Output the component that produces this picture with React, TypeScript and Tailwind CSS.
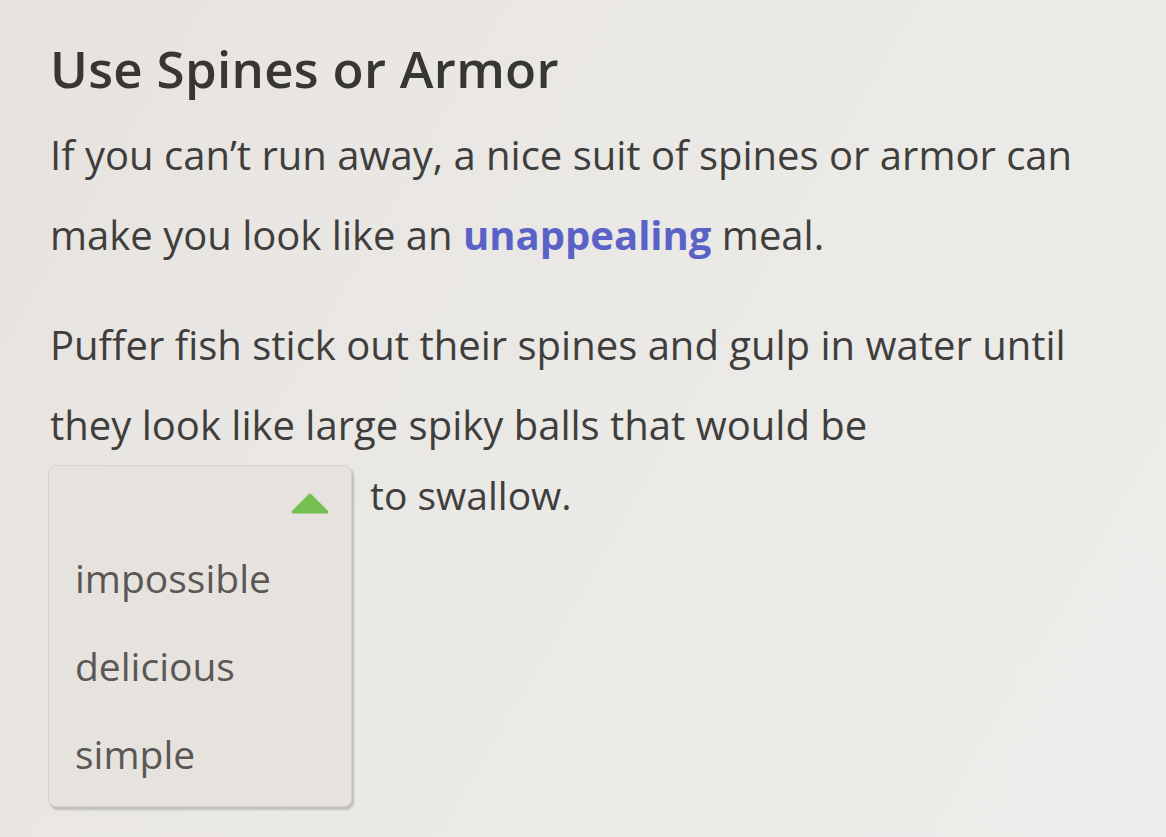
import React from "react"

const OPTIONS = ["impossible", "delicious", "simple"]

function Dropdown() {
  return (
    <span className="inline-flex w-[304px] flex-col rounded-lg border border-[#d6d2cd] bg-[#e6e3df] shadow-[2px_3px_2px_rgba(0,0,0,0.18)]">
      <span className="flex h-[68px] items-start justify-end pr-[20px] pt-[26px]">
        <svg width="42" height="22" viewBox="0 0 42 22" aria-hidden="true">
          <path d="M4 20 L21 3 L38 20 Z" fill="#74bf4f" stroke="#74bf4f" strokeWidth="3" strokeLinejoin="round" />
        </svg>
      </span>
      {OPTIONS.map((o) => (
        <span key={o} className="block h-[88px] pl-[26px] text-[39px] leading-[88px] text-[#5a5755]">
          {o}
        </span>
      ))}
      <span className="block h-[8px]" />
    </span>
  )
}

export default function App() {
  return (
    <div
      className="min-h-[837px] w-full bg-[linear-gradient(120deg,#e6e3df_0%,#ebe9e6_50%,#eeedeb_100%)] px-[50px] pt-[36px] text-[#403e3c]"
      style={{ fontFamily: "'Open Sans', 'Noto Sans', sans-serif" }}
    >
      <h2 className="text-[51px] font-semibold leading-[64px] tracking-[0.3px] text-[#383634]">
        Use Spines or Armor
      </h2>
      <p className="mt-[15px] text-[40px] leading-[80px]">
        If you can’t run away, a nice suit of spines or armor can
        <br />
        make you look like an <span className="font-bold text-[#5a62c8]">unappealing</span> meal.
      </p>
      <p className="mt-[30px] text-[40px] leading-[80px]">
        Puffer fish stick out their spines and gulp in water until
        <br />
        they look like large spiky balls that would be
      </p>
      <div className="-ml-[2px] flex items-start">
        <Dropdown />
        <span className="ml-[18px] text-[39px] leading-[60px]">to swallow.</span>
      </div>
    </div>
  )
}
